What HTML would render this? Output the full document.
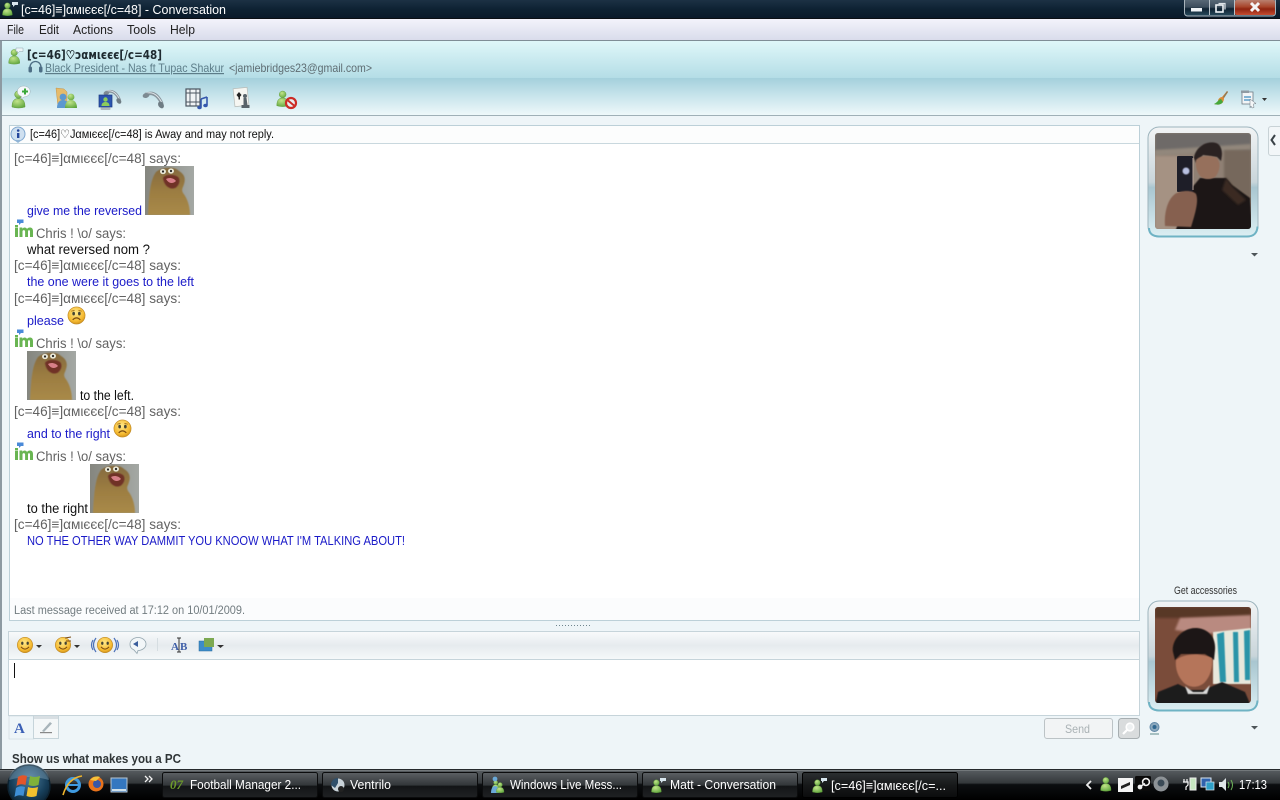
<!DOCTYPE html>
<html><head><meta charset="utf-8"><title>Conversation</title>
<style>
html,body{margin:0;padding:0;width:1280px;height:800px;overflow:hidden;background:#eef5f8}
svg{display:block}
text{font-family:"Liberation Sans","DejaVu Sans",sans-serif;font-size:12.5px;white-space:pre}
.s{fill:#626262;font-size:13.5px}
.b{fill:#1a1ac8;font-size:13px}
.k{fill:#111;font-size:13.5px}
.t{fill:#fff;font-size:13px}
.m{fill:#222;font-size:13px}
</style></head><body>
<svg xmlns="http://www.w3.org/2000/svg" width="1280" height="800" viewBox="0 0 1280 800">
<defs>
<linearGradient id="tb" x1="0" y1="0" x2="0" y2="1"><stop offset="0" stop-color="#1c3144"/><stop offset=".5" stop-color="#0e2233"/><stop offset="1" stop-color="#0a1a2a"/></linearGradient>
<linearGradient id="mn" x1="0" y1="0" x2="0" y2="1"><stop offset="0" stop-color="#f3f3fb"/><stop offset="1" stop-color="#d9dceb"/></linearGradient>
<linearGradient id="hd" x1="0" y1="0" x2="0" y2="1"><stop offset="0" stop-color="#dff7f9"/><stop offset="1" stop-color="#b4dde6"/></linearGradient>
<linearGradient id="tl" x1="0" y1="0" x2="0" y2="1"><stop offset="0" stop-color="#a4d0dc"/><stop offset=".5" stop-color="#c9e5ec"/><stop offset="1" stop-color="#eef8fa"/></linearGradient>
<linearGradient id="et" x1="0" y1="0" x2="0" y2="1"><stop offset="0" stop-color="#f8fafb"/><stop offset=".5" stop-color="#e6ebee"/><stop offset="1" stop-color="#f5f8f9"/></linearGradient>
<linearGradient id="task" x1="0" y1="0" x2="0" y2="1"><stop offset="0" stop-color="#5a5f63"/><stop offset=".45" stop-color="#34383b"/><stop offset=".5" stop-color="#0c0e10"/><stop offset="1" stop-color="#000"/></linearGradient>
<linearGradient id="btn" x1="0" y1="0" x2="0" y2="1"><stop offset="0" stop-color="#5c6064"/><stop offset=".5" stop-color="#33373a"/><stop offset=".55" stop-color="#131517"/><stop offset="1" stop-color="#1f2123"/></linearGradient>
<linearGradient id="act" x1="0" y1="0" x2="0" y2="1"><stop offset="0" stop-color="#2c2f31"/><stop offset=".5" stop-color="#17191a"/><stop offset="1" stop-color="#0b0c0d"/></linearGradient>
<linearGradient id="cls" x1="0" y1="0" x2="0" y2="1"><stop offset="0" stop-color="#b9806f"/><stop offset=".45" stop-color="#a8452c"/><stop offset=".6" stop-color="#8f2410"/><stop offset="1" stop-color="#c54c30"/></linearGradient>
<linearGradient id="wbt" x1="0" y1="0" x2="0" y2="1"><stop offset="0" stop-color="#5f6f7d"/><stop offset=".5" stop-color="#3c4d5c"/><stop offset=".6" stop-color="#0f2232"/><stop offset="1" stop-color="#2a4d5f"/></linearGradient>
<linearGradient id="frm" x1="0" y1="0" x2="0" y2="1"><stop offset="0" stop-color="#f2f4f5"/><stop offset=".5" stop-color="#c9d5da"/><stop offset=".55" stop-color="#a9c6d0"/><stop offset="1" stop-color="#dceff3"/></linearGradient>
<linearGradient id="pbg" x1="0" y1="0" x2="1" y2="0"><stop offset="0" stop-color="#85867f"/><stop offset="1" stop-color="#a4a8a4"/></linearGradient>
<linearGradient id="pot" x1="0" y1="0" x2="0" y2="1"><stop offset="0" stop-color="#846a3e"/><stop offset=".5" stop-color="#9c7d42"/><stop offset="1" stop-color="#a98a48"/></linearGradient>
<radialGradient id="smy" cx=".45" cy=".35" r=".7"><stop offset="0" stop-color="#ffe98a"/><stop offset=".7" stop-color="#f5b92f"/><stop offset="1" stop-color="#c98a18"/></radialGradient>
<radialGradient id="grn" cx=".4" cy=".3" r=".8"><stop offset="0" stop-color="#c2e48a"/><stop offset="1" stop-color="#5ba33a"/></radialGradient>
<radialGradient id="orb" cx=".5" cy=".35" r=".7"><stop offset="0" stop-color="#4b7b9c"/><stop offset=".6" stop-color="#173f5a"/><stop offset="1" stop-color="#081a28"/></radialGradient>
<filter id="bl" x="-20%" y="-20%" width="140%" height="140%"><feGaussianBlur stdDeviation="1"/></filter>
<filter id="bs" x="-20%" y="-20%" width="140%" height="140%"><feGaussianBlur stdDeviation=".5"/></filter>
<clipPath id="c1"><rect x="1155" y="133" width="96" height="96" rx="3"/></clipPath>
<clipPath id="c2"><rect x="1155" y="607" width="96" height="96" rx="3"/></clipPath>

<symbol id="potato" viewBox="0 0 49 49">
<rect width="49" height="49" fill="url(#pbg)"/>
<path d="M3 49C4 30 5 14 11 6C16 1 30 0 34 5C39 8 41 12 39 18C38 22 36 23 38 27C43 33 45 42 45 49Z" fill="url(#pot)" filter="url(#bs)"/>
<path d="M18 12C20 8 29 8 33 11C36 14 34 20 30 22C25 24 19 20 18 12Z" fill="#6f3128" filter="url(#bs)"/>
<path d="M21 13C24 11 29 12 31 15C28 18 24 18 21 13Z" fill="#d67f88"/>
<ellipse cx="18" cy="5.500" rx="3" ry="2.600" fill="#e9e8d8"/><ellipse cx="26" cy="5" rx="3" ry="2.600" fill="#e9e8d8"/>
<circle cx="18" cy="5.500" r="1.100" fill="#222"/><circle cx="26" cy="5" r="1.100" fill="#222"/>
</symbol>

<symbol id="sad" viewBox="0 0 20 20">
<circle cx="10" cy="10" r="9" fill="url(#smy)" stroke="#c08a25" stroke-width=".7"/>
<ellipse cx="7" cy="8" rx="1.400" ry="1.900" fill="#443"/><ellipse cx="13" cy="8" rx="1.400" ry="1.900" fill="#443"/>
<path d="M6 14.500Q10 10.500 14 14.500" fill="none" stroke="#7a4a10" stroke-width="1.300"/>
<path d="M4.500 5.500L8 4.500M15.500 5.500L12 4.500" stroke="#a06a15" stroke-width=".8"/>
</symbol>

<symbol id="smile" viewBox="0 0 20 20">
<circle cx="10" cy="10" r="8.500" fill="url(#smy)" stroke="#c08a25" stroke-width=".7"/>
<ellipse cx="7" cy="8" rx="1.300" ry="1.800" fill="#443"/><ellipse cx="13" cy="8" rx="1.300" ry="1.800" fill="#443"/>
<path d="M5.500 12Q10 17 14.500 12" fill="none" stroke="#7a4a10" stroke-width="1.200"/>
</symbol>

<symbol id="im" viewBox="0 0 20 20">
<rect x="1" y="8.500" width="3" height="9.500" fill="#69b552"/>
<rect x="1" y="6" width="3" height="2" fill="#69b552"/>
<path d="M5.500 18V8.500h2.800v1.300C9.300 8.200 12 8 13 10 14.200 8 19 7.600 19 12V18h-3v-5.500c0-1.900-2-1.900-2 0V18h-2.900v-5.500c0-1.900-2.600-1.900-2.600 0V18Z" fill="#69b552"/>
<path d="M3 0.500h6.500v3.500H7L5 6V4H3Z" fill="#4a8ad8"/>
</symbol>

<symbol id="bud" viewBox="0 0 20 20">
<circle cx="8.500" cy="5.500" r="3.800" fill="url(#grn)" stroke="#5f9a3a" stroke-width=".5"/>
<path d="M2 18C2 11 5 9.500 8.500 9.500S15 11 15 18Q8.500 20 2 18Z" fill="url(#grn)" stroke="#5f9a3a" stroke-width=".5"/>
</symbol>

<symbol id="phone" viewBox="0 0 24 24">
<path d="M3.500 7.500Q14 3 20 17" fill="none" stroke="#87949c" stroke-width="3.400"/>
<path d="M3.500 6.500Q13 3.200 19.500 15" fill="none" stroke="#dfe6ea" stroke-width="1"/>
<ellipse cx="4" cy="8.500" rx="3.400" ry="2.400" fill="#7d8a92" transform="rotate(-15 4 8.500)"/>
<ellipse cx="19" cy="18" rx="3.600" ry="2.600" fill="#6f7c84" transform="rotate(55 19 18)"/>
</symbol>
</defs>

<!-- base -->
<rect width="1280" height="800" fill="#eef5f8"/>
<rect x="0" y="0" width="1280" height="18" fill="url(#tb)"/>
<rect x="0" y="18" width="1280" height="1" fill="#0b0f14"/>
<rect x="0" y="19" width="1280" height="21" fill="url(#mn)"/>
<rect x="0" y="40" width="1280" height="1" fill="#7f8d96"/>
<rect x="1" y="41" width="1279" height="37" fill="url(#hd)"/>
<rect x="1" y="78" width="1279" height="37" fill="url(#tl)"/>
<rect x="0" y="115" width="1280" height="1" fill="#9fb0b7"/>
<rect x="0" y="41" width="2" height="728" fill="#8d9aa2"/>
<rect x="2" y="116" width="1278" height="653" fill="#eef5f8"/>

<!-- title bar -->
<g transform="translate(1,1)"><use href="#bud" width="15" height="16"/></g>
<path d="M12 2h6v3h-3l-2 2V5h-1Z" fill="#d8e6ee"/>
<text class="t" x="21" y="14" textLength="205" lengthAdjust="spacingAndGlyphs">[c=46]≡]αмιєєє[/c=48] - Conversation</text>
<rect x="1184.500" y="-2" width="91" height="18" rx="3" fill="url(#wbt)" stroke="#a9b4bc"/>
<rect x="1235" y="0" width="40" height="15" rx="2" fill="url(#cls)"/>
<path d="M1209.500 0V15M1234.500 0V15" stroke="#b6c0c7"/>
<rect x="1191" y="8" width="11" height="3.500" fill="#eef2f5"/>
<rect x="1216" y="5" width="7" height="7" fill="none" stroke="#eef2f5" stroke-width="1.600"/><path d="M1218.500 3.500h6.500v6" fill="none" stroke="#dde3e8" stroke-width="1.200"/>
<path d="M1251 3L1259 11M1259 3L1251 11" stroke="#f5f5f5" stroke-width="3"/>

<!-- menu -->
<text class="m" x="7" y="34" textLength="17" lengthAdjust="spacingAndGlyphs">File</text>
<text class="m" x="39" y="34" textLength="20" lengthAdjust="spacingAndGlyphs">Edit</text>
<text class="m" x="73" y="34" textLength="40" lengthAdjust="spacingAndGlyphs">Actions</text>
<text class="m" x="127" y="34" textLength="29" lengthAdjust="spacingAndGlyphs">Tools</text>
<text class="m" x="170" y="34" textLength="25" lengthAdjust="spacingAndGlyphs">Help</text>

<!-- header -->
<use href="#bud" x="7" y="47" width="17" height="19"/>
<path d="M16 48h7v3.500h-3.500l-2 2v-2H16Z" fill="#eef6f8" stroke="#8fa4ad" stroke-width=".5"/>
<text x="27" y="59" textLength="135" lengthAdjust="spacingAndGlyphs" style="font-family:'DejaVu Sans',sans-serif;font-size:12px;font-weight:bold;fill:#1e2a30">[c=46]<tspan stroke="#1e2a30" stroke-width=".5">♡</tspan>ɔαмιєєє[/c=48]</text>
<path d="M30 71V67a5.500 5.500 0 0 1 11 0V71" fill="none" stroke="#4d6e85" stroke-width="1.300"/><rect x="28.500" y="66.500" width="3.500" height="6" rx="1.500" fill="#4d6e85"/><rect x="39" y="66.500" width="3.500" height="6" rx="1.500" fill="#4d6e85"/>
<text x="45" y="72" textLength="179" lengthAdjust="spacingAndGlyphs" style="font-size:12px;fill:#5d7d89" text-decoration="underline">Black President - Nas ft Tupac Shakur</text>
<text x="229" y="72" textLength="143" lengthAdjust="spacingAndGlyphs" style="font-size:12px;fill:#5f6d73">&lt;jamiebridges23@gmail.com&gt;</text>

<!-- toolbar icons -->
<use href="#bud" x="10" y="89" width="20" height="20"/>
<path d="M20 87a6.500 5.500 0 1 1 4 10l-3 2 .5-2.500a6.500 5.500 0 0 1-1.500-9.500Z" fill="#f4f8fa" stroke="#9db0b8" stroke-width=".5"/><path d="M25 88.500v6M22 91.500h6" stroke="#3aa83a" stroke-width="2"/>

<path d="M56 88l8 1 3 3v13l-9 2Z" fill="#e6bb6a" stroke="#c2944a" stroke-width=".5"/>
<circle cx="63" cy="97" r="3.400" fill="#5d98cf"/><path d="M57 108c0-6 3-8 6-8s6 2 6 8Z" fill="#5d98cf"/>
<circle cx="71" cy="97" r="3.400" fill="url(#grn)"/><path d="M65 108c0-6 3-8 6-8s6 2 6 8Z" fill="url(#grn)"/>

<use href="#phone" x="103" y="86" width="20" height="20"/>
<rect x="99" y="95" width="13" height="12" fill="#2b55b0" stroke="#1c3a80" stroke-width=".7"/><circle cx="105.500" cy="99.500" r="2.200" fill="#8ccb5c"/><path d="M101.500 106c0-3 2-4 4-4s4 1 4 4Z" fill="#8ccb5c"/><rect x="100.500" y="107.500" width="10" height="2.500" rx="1" fill="#aeb7bc"/>

<use href="#phone" x="142" y="87" width="24" height="24"/>

<rect x="186" y="89" width="14" height="17" fill="#f0f3f5" stroke="#4a5560" stroke-width="1.200"/>
<path d="M186.500 93h13M186.500 102h13M190 89v17M196 89v17" stroke="#4a5560" stroke-width=".9"/>
<path d="M201 99v8M207 97v8M201 99l6-2" fill="none" stroke="#3457ad" stroke-width="1.600"/><ellipse cx="199.500" cy="107.500" rx="2.300" ry="1.800" fill="#3457ad"/><ellipse cx="205.500" cy="105.500" rx="2.300" ry="1.800" fill="#3457ad"/>

<rect x="234" y="88" width="14" height="18" fill="#f6f6f2" stroke="#b8bcb8" stroke-width=".7" transform="rotate(-6 241 97)"/>
<path d="M239 92l2.500 3 -2.500 3-2.500-3Z" fill="#222"/><rect x="238.500" y="96" width="1.500" height="3.500" fill="#222"/>
<circle cx="245" cy="96" r="2" fill="#59636a"/><path d="M243.500 98h3l1 7h2v3h-8v-3h2Z" fill="#59636a"/>

<use href="#bud" x="275" y="89" width="18" height="19"/>
<circle cx="291" cy="103" r="5" fill="#e9eef0" stroke="#cc2b25" stroke-width="2.200"/><path d="M288 100.500l6 5" stroke="#cc2b25" stroke-width="2"/>

<path d="M1227 91l-5 6c-2 0-4 2-4 4-1 2-3 3-4 3 3 1 7 1 9-2 1-2 1-3 1-4l4-6Z" fill="#dc8a3a"/>
<path d="M1214 104c3 1 7 1 9-2l-2-3c-2 0-3 3-7 5Z" fill="#46a83a"/><path d="M1223 97l4-6 1 1-4 6Z" fill="#8e7a58"/>
<rect x="1242" y="92" width="11" height="12" fill="#f2f5f7" stroke="#6e7b84" stroke-width=".8"/><rect x="1241" y="90.500" width="8" height="2.500" fill="#909ba3"/>
<path d="M1244 97h7M1244 100h7" stroke="#3f8ec0" stroke-width="1.200"/><path d="M1250 99l6 4.500-2.500.5 .5 3.500-2 .5-1-2-1 2Z" fill="#f5f7f8" stroke="#687680" stroke-width=".5"/>
<path d="M1262 98h5l-2.500 3Z" fill="#333"/>

<!-- chat panel -->
<rect x="9.500" y="125.500" width="1130" height="495" fill="#fff" stroke="#bcd0d8"/>
<rect x="10" y="126" width="1129" height="17" fill="#fcfdfd"/>
<rect x="10" y="143" width="1129" height="1" fill="#c9d8de"/>
<rect x="10" y="598" width="1129" height="22" fill="#fbfcfd"/>

<circle cx="18" cy="134" r="7" fill="#cfe0f0" stroke="#7ea6cf" stroke-width="1"/><path d="M14 140l4 3 4-3Z" fill="#90b4d6"/>
<rect x="17" y="133" width="2.400" height="5" fill="#25479c"/><circle cx="18.200" cy="130.500" r="1.300" fill="#25479c"/>
<text x="30" y="138" textLength="244" lengthAdjust="spacingAndGlyphs" style="font-size:11.500px;fill:#111">[c=46]♡Jαмιєєє[/c=48] is Away and may not reply.</text>

<text class="s" x="14" y="163" textLength="167" lengthAdjust="spacingAndGlyphs">[c=46]≡]αмιєєє[/c=48] says:</text>
<use href="#potato" x="145" y="166" width="49" height="49"/>
<text class="b" x="27" y="215" textLength="115" lengthAdjust="spacingAndGlyphs">give me the reversed</text>

<use href="#im" x="14" y="219" width="20" height="20"/>
<text class="s" x="36" y="238" textLength="90" lengthAdjust="spacingAndGlyphs">Chris ! \o/ says:</text>
<text class="k" x="27" y="254" textLength="123" lengthAdjust="spacingAndGlyphs">what reversed nom ?</text>

<text class="s" x="14" y="270" textLength="167" lengthAdjust="spacingAndGlyphs">[c=46]≡]αмιєєє[/c=48] says:</text>
<text class="b" x="27" y="286" textLength="167" lengthAdjust="spacingAndGlyphs">the one were it goes to the left</text>

<text class="s" x="14" y="303" textLength="167" lengthAdjust="spacingAndGlyphs">[c=46]≡]αмιєєє[/c=48] says:</text>
<text class="b" x="27" y="325" textLength="37" lengthAdjust="spacingAndGlyphs">please</text>
<use href="#sad" x="67" y="306" width="19" height="19"/>

<use href="#im" x="14" y="329" width="20" height="20"/>
<text class="s" x="36" y="348" textLength="90" lengthAdjust="spacingAndGlyphs">Chris ! \o/ says:</text>
<use href="#potato" x="27" y="351" width="49" height="49"/>
<text class="k" x="80" y="400" textLength="54" lengthAdjust="spacingAndGlyphs">to the left.</text>

<text class="s" x="14" y="416" textLength="167" lengthAdjust="spacingAndGlyphs">[c=46]≡]αмιєєє[/c=48] says:</text>
<text class="b" x="27" y="438" textLength="83" lengthAdjust="spacingAndGlyphs">and to the right</text>
<use href="#sad" x="113" y="419" width="19" height="19"/>

<use href="#im" x="14" y="442" width="20" height="20"/>
<text class="s" x="36" y="461" textLength="90" lengthAdjust="spacingAndGlyphs">Chris ! \o/ says:</text>
<use href="#potato" x="90" y="464" width="49" height="49"/>
<text class="k" x="27" y="513" textLength="61" lengthAdjust="spacingAndGlyphs">to the right</text>

<text class="s" x="14" y="529" textLength="167" lengthAdjust="spacingAndGlyphs">[c=46]≡]αмιєєє[/c=48] says:</text>
<text class="b" x="27" y="545" textLength="378" lengthAdjust="spacingAndGlyphs">NO THE OTHER WAY DAMMIT YOU KNOOW WHAT I'M TALKING ABOUT!</text>

<text x="14" y="614" textLength="231" lengthAdjust="spacingAndGlyphs" style="font-size:11.500px;fill:#727c80">Last message received at 17:12 on 10/01/2009.</text>

<path d="M556 625.500h36" stroke="#6f858e" stroke-width="1" stroke-dasharray="1 2"/>

<!-- input -->
<rect x="8.500" y="631.500" width="1131" height="84" fill="#fff" stroke="#c6d4da"/>
<rect x="9" y="632" width="1130" height="27" fill="url(#et)"/>
<rect x="9" y="659" width="1130" height="1" fill="#c6d4da"/>
<rect x="14" y="663" width="1" height="15" fill="#111"/>

<use href="#smile" x="16" y="636" width="18" height="18"/><path d="M36 645h6l-3 3Z" fill="#333"/>
<use href="#smile" x="54" y="636" width="18" height="18"/><path d="M65 638l6-1M66 641l5 0" stroke="#7a4a10" stroke-width="1"/><path d="M74 645h6l-3 3Z" fill="#333"/>
<use href="#smile" x="96" y="636" width="18" height="18"/>
<path d="M96 638q-5 7 0 14M93 640q-3 5 0 10M114 638q5 7 0 14M117 640q3 5 0 10" fill="none" stroke="#4a70b8" stroke-width="1.200"/>
<path d="M130 644a8 6.500 0 1 1 8 6.500l-1 3-3-3.500a8 6.500 0 0 1-4-6Z" fill="#f2f6f8" stroke="#92a4ad" stroke-width=".8"/><path d="M133 644l5-3v6Z" fill="#3b5e9c"/>
<rect x="157" y="638" width="1" height="13" fill="#d5dde1"/>
<text x="171" y="650" style="font-family:'Liberation Serif',serif;font-size:11px;font-weight:bold;fill:#3f5fa8">A</text><text x="180" y="650" style="font-family:'Liberation Serif',serif;font-size:11px;font-weight:bold;fill:#3f5fa8">B</text>
<path d="M177 638h4M177 652h4M179 638v14" stroke="#333" stroke-width="1"/>
<rect x="199" y="641" width="13" height="10" fill="#3d8cc8" stroke="#276a9e" stroke-width=".5"/><rect x="204" y="638" width="10" height="9" fill="#7ca850"/>
<path d="M217 645h7l-3.500 3Z" fill="#333"/>

<!-- format tools -->
<rect x="9" y="716" width="25" height="23" fill="#eef5f8" stroke="#c6d4da" stroke-width=".5"/>
<rect x="33.500" y="716" width="25" height="22.500" fill="#f4f7f8" stroke="#c6d4da"/>
<rect x="34" y="716" width="24" height="3" fill="#d8dfe3"/>
<text x="14" y="733" style="font-family:'Liberation Serif',serif;font-size:15px;font-weight:bold;fill:#3a5fb5">A</text>
<path d="M42 731l8-9 2 1.500-8 8.500Z" fill="#a8b4ba"/><rect x="40" y="732" width="12" height="1.200" fill="#888"/>

<rect x="1044.500" y="718.500" width="68" height="20" rx="2.500" fill="#f2f4f5" stroke="#bcc3c6"/>
<text x="1065" y="733" textLength="25" lengthAdjust="spacingAndGlyphs" style="font-size:12px;fill:#aab2b5">Send</text>
<rect x="1118.500" y="718.500" width="21" height="20" rx="3" fill="#d9dcdd" stroke="#a7aeb1"/>
<circle cx="1130" cy="727" r="3.800" fill="#eef1f2" stroke="#fff" stroke-width="1.600"/><path d="M1127 730l-4 4" stroke="#fff" stroke-width="2.200"/>
<circle cx="1154.500" cy="727" r="4.500" fill="#8ba8bd" stroke="#5f87a6" stroke-width="1"/><circle cx="1154.500" cy="727" r="2" fill="#2f6790"/><path d="M1150 734h9" stroke="#8aa" stroke-width="1.400"/>
<path d="M1251 726h7l-3.500 3.500Z" fill="#4d5559"/>
<path d="M1251 253h7l-3.500 3.500Z" fill="#4d5559"/>

<text x="12" y="763" textLength="169" lengthAdjust="spacingAndGlyphs" style="font-size:12.500px;font-weight:bold;fill:#2f3537">Show us what makes you a PC</text>

<!-- right col -->
<path d="M1280 126.500h-9a2.500 2.500 0 0 0-2.500 2.500v24a2.500 2.500 0 0 0 2.500 2.500h9" fill="#f2f6f8" stroke="#c8d2d6"/>
<path d="M1275 135l-3.500 5 3.500 5" fill="none" stroke="#3a4247" stroke-width="2"/>

<text x="1174" y="594" textLength="63" lengthAdjust="spacingAndGlyphs" style="font-size:11px;fill:#333">Get accessories</text>

<!-- avatar 1 -->
<rect x="1148" y="127" width="110" height="110" rx="11" fill="url(#frm)" stroke="#9db4bd"/>
<path d="M1149 228q0 8 10 8.500h88q10 0 10.500-10" fill="none" stroke="#6fb3c4" stroke-width="2"/>
<g clip-path="url(#c1)">
<rect x="1155" y="133" width="96" height="96" fill="#8f8074"/>
<rect x="1155" y="133" width="96" height="18" fill="#6e6a67" filter="url(#bl)"/>
<path d="M1155 150L1251 144V150L1155 156Z" fill="#92877c" filter="url(#bl)"/>
<rect x="1155" y="156" width="24" height="74" fill="#a59283" filter="url(#bl)"/>
<rect x="1224" y="150" width="27" height="50" fill="#76685c" filter="url(#bl)"/>
<path d="M1175 232L1190 190L1200 178H1226L1232 185L1250 198L1252 232Z" fill="#1f1714" filter="url(#bs)"/>
<path d="M1226 178L1232 186L1246 200L1238 205L1222 190Z" fill="#3a2a24" filter="url(#bl)"/>
<path d="M1194 158c1-10 12-18 22-15 6 2 7 10 5 18l-4-4-14-2-7 8Z" fill="#2a2220" filter="url(#bs)"/>
<path d="M1196 160c4-5 14-5 21-2 4 5 3 12-1 18-4 4-12 4-16 0-3-4-5-10-4-16Z" fill="#96705c" filter="url(#bs)"/>
<rect x="1177" y="156" width="16" height="36" rx="1" fill="#1e1e28"/>
<rect x="1192.500" y="158" width="1" height="32" fill="#b9a79d"/>
<circle cx="1186" cy="171" r="3.500" fill="#b8c0e0" filter="url(#bs)"/>
<path d="M1165 226c-1-12 2-26 10-32 6-4 18-4 21 0 3 7-1 20-5 33Z" fill="#86604f" filter="url(#bs)"/>
</g>
<!-- avatar 2 -->
<rect x="1148" y="601" width="110" height="110" rx="11" fill="url(#frm)" stroke="#9db4bd"/>
<path d="M1149 702q0 8 10 8.500h88q10 0 10.500-10" fill="none" stroke="#6fb3c4" stroke-width="2"/>
<g clip-path="url(#c2)">
<rect x="1155" y="607" width="96" height="96" fill="#7a4c3a"/>
<rect x="1155" y="607" width="96" height="11" fill="#583828" filter="url(#bl)"/>
<path d="M1180 618L1251 615V630L1205 634L1175 630Z" fill="#b98a80" filter="url(#bl)"/>
<path d="M1213 632L1251 628V684H1213Z" fill="#e8e8dc" filter="url(#bs)"/>
<path d="M1217 634l7-2 2 50h-6ZM1233 632l5 0 1 50h-5ZM1244 631l6-1v50h-5Z" fill="#2c94a8" filter="url(#bs)"/>
<path d="M1173 652c-2-12 10-25 24-24 12 1 19 10 18 22l-1 10-9-6-24 0-6 6Z" fill="#1d1512" filter="url(#bs)"/>
<path d="M1176 660c8-7 26-7 36-2 1 10-2 19-8 25-6 5-14 5-20 0-6-6-9-14-8-23Z" fill="#b5745a" filter="url(#bs)"/>
<path d="M1155 706L1158 692L1178 684L1190 690L1204 690L1222 682L1245 692L1251 706Z" fill="#1f1a1f" filter="url(#bs)"/>
<path d="M1185 686l8 6 10 0 7-7 -3 9h-19Z" fill="#d9d9d8" filter="url(#bs)"/>
</g>

<!-- taskbar -->
<rect x="0" y="769" width="1280" height="31" fill="url(#task)"/>
<rect x="0" y="769" width="1280" height="1" fill="#25292c"/>
<rect x="0" y="770" width="1280" height="1" fill="#73787b"/>

<circle cx="29" cy="786" r="21" fill="url(#orb)" stroke="#0d2230" stroke-width="1.500"/>
<path d="M9 780a20 16 0 0 1 40 0q-20-6-40 0Z" fill="#9dbace" opacity=".35"/>
<path d="M18 777q4-3 9-1l-1.500 9q-5-2-9 1Z" fill="#e2552a"/>
<path d="M30 776q4 2 10 0l-1.500 9q-5 2-10 0Z" fill="#7fb23a"/>
<path d="M16 788q4-3 9-1l-1.500 9q-5-2-9 1Z" fill="#3e8fd6"/>
<path d="M28 787q4 2 10 0l-1.500 9q-5 2-10 0Z" fill="#f2c12e"/>

<circle cx="73" cy="785" r="6.500" fill="none" stroke="#3f9ae0" stroke-width="3"/><path d="M66 785h14" stroke="#3f9ae0" stroke-width="2"/>
<path d="M63 795Q68 778 82 776" fill="none" stroke="#efb52c" stroke-width="1.600"/>
<circle cx="96" cy="784" r="7.500" fill="#e8731c"/><circle cx="97" cy="784" r="4" fill="#3857a8"/><path d="M90 780q5-5 10-3l-4 4Z" fill="#f4c23a"/>
<rect x="111" y="778" width="16" height="14" fill="#3477c0" stroke="#b8c6d0"/><rect x="112" y="789" width="14" height="2" fill="#cfe0ea"/>
<path d="M145 776l3 3-3 3M149 776l3 3-3 3" fill="none" stroke="#f2f2f2" stroke-width="1.300"/>

<g>
<rect x="162.500" y="772.500" width="155" height="25" rx="2" fill="url(#btn)" stroke="#0b0c0d"/>
<rect x="322.500" y="772.500" width="155" height="25" rx="2" fill="url(#btn)" stroke="#0b0c0d"/>
<rect x="482.500" y="772.500" width="155" height="25" rx="2" fill="url(#btn)" stroke="#0b0c0d"/>
<rect x="642.500" y="772.500" width="155" height="25" rx="2" fill="url(#btn)" stroke="#0b0c0d"/>
<rect x="802.500" y="772.500" width="155" height="25" rx="2" fill="url(#act)" stroke="#000"/>
</g>
<text x="170" y="789" style="font-family:'Liberation Serif',serif;font-size:13px;font-weight:bold;font-style:italic;fill:#6d9b2a">07</text>
<text class="t" x="190" y="789" textLength="111" lengthAdjust="spacingAndGlyphs">Football Manager 2...</text>
<circle cx="338" cy="785" r="6.500" fill="#c9d3d9"/><path d="M331 785a7 7 0 0 1 7-7v5l-3 5Z" fill="#2f4f6a"/><circle cx="341" cy="789" r="3" fill="#222"/>
<text class="t" x="350" y="789" textLength="41" lengthAdjust="spacingAndGlyphs">Ventrilo</text>
<use href="#bud" x="491" y="778" width="11" height="14"/><circle cx="495" cy="779" r="2.400" fill="#6aa9d8"/><path d="M491 793c0-5 2-7 4-7s4 2 4 7Z" fill="#6aa9d8"/><use href="#bud" x="495" y="781" width="12" height="13"/>
<text class="t" x="510" y="789" textLength="112" lengthAdjust="spacingAndGlyphs">Windows Live Mess...</text>
<use href="#bud" x="650" y="778" width="15" height="16"/><path d="M660 778h6v3h-3l-2 2v-2h-1Z" fill="#d8e6ee"/>
<text class="t" x="670" y="789" textLength="106" lengthAdjust="spacingAndGlyphs">Matt - Conversation</text>
<use href="#bud" x="811" y="778" width="15" height="16"/><path d="M821 778h6v3h-3l-2 2v-2h-1Z" fill="#d8e6ee"/>
<text class="t" x="831" y="790" textLength="115" lengthAdjust="spacingAndGlyphs">[c=46]≡]αмιєєє[/c=...</text>

<!-- tray -->
<path d="M1091 781l-4 4 4 4" fill="none" stroke="#eee" stroke-width="1.800"/>
<use href="#bud" x="1099" y="776" width="16" height="16"/>
<rect x="1118" y="778" width="15" height="14" fill="#f4f4f4"/><path d="M1121 786l9-4v3l-9 4Z" fill="#222"/>
<rect x="1135" y="776" width="16" height="15" rx="1.500" fill="#0a0a0a"/><circle cx="1146" cy="782" r="3.400" fill="none" stroke="#f1f1f1" stroke-width="1.600"/><circle cx="1140" cy="787" r="2.400" fill="#f1f1f1"/><path d="M1141 786l4-2.500" stroke="#f1f1f1" stroke-width="1.400"/>
<circle cx="1161" cy="784" r="7.500" fill="#8d9296"/><circle cx="1161" cy="783" r="3.500" fill="#3b4a56"/>
<rect x="1190" y="778" width="6" height="12" fill="#c6e6c0" stroke="#eee"/><path d="M1184 779v3M1187 779v3M1183 782h5v3l-2 2v3" fill="none" stroke="#f5f5f5" stroke-width="1.200"/>
<rect x="1201" y="778" width="10" height="9" fill="#2f62ad" stroke="#dbe6ee"/><rect x="1206" y="782" width="8" height="8" fill="#2fa0c8" stroke="#dbe6ee" stroke-width=".7"/>
<path d="M1219 782h3l4-4v13l-4-4h-3Z" fill="#dfe5e8"/><path d="M1228 782q2 3 0 6M1231 780q3 5 0 10" fill="none" stroke="#6fb85a" stroke-width="1"/>
<text class="t" x="1239" y="789" textLength="28" lengthAdjust="spacingAndGlyphs">17:13</text>
</svg>
</body></html>
